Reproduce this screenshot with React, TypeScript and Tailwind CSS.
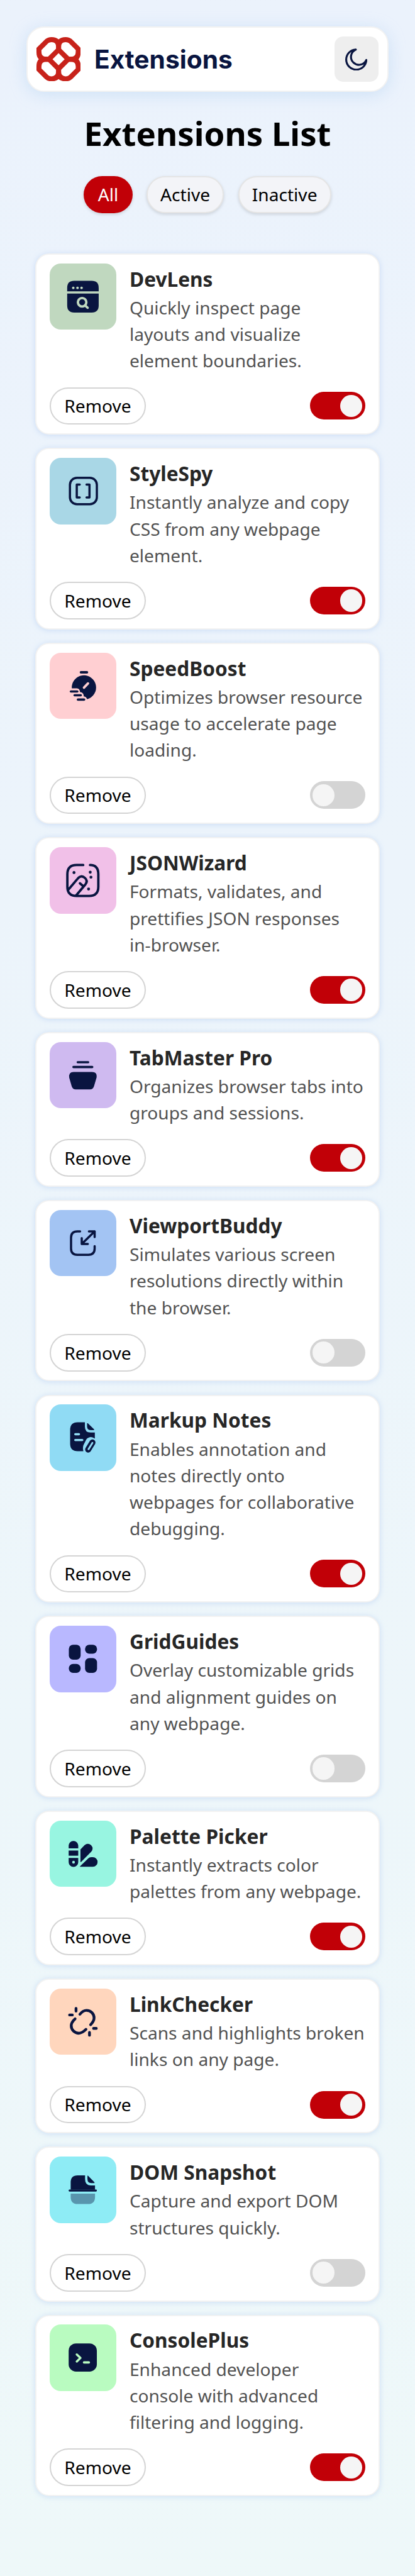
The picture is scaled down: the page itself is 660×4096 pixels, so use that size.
import { useState, type ReactNode } from "react";

type Extension = {
  name: string;
  description: string;
  tile: string;
  viewBox: string;
  icon: ReactNode;
  active: boolean;
};

const NAVY = "#091540";

const extensions: Extension[] = [
  {
    name: "DevLens",
    description: "Quickly inspect page layouts and visualize element boundaries.",
    tile: "#c0d8bf",
    viewBox: "0 0 360 360",
    active: true,
    icon: (
      <>
        <path d="M95 151V132Q95 94 133 94H228Q266 94 266 132V151Z" fill={NAVY} />
        <path d="M95 163H266V228Q266 266 228 266H133Q95 266 95 228Z" fill={NAVY} />
        <g fill="#c0d8bf">
          <circle cx="128" cy="132" r="7" />
          <circle cx="151" cy="132" r="7" />
          <circle cx="173" cy="132" r="7" />
        </g>
        <g stroke="#c0d8bf" strokeWidth="13" strokeLinecap="round">
          <circle cx="176" cy="210" r="23" />
          <path d="M194 229L206 240" />
        </g>
      </>
    ),
  },
  {
    name: "StyleSpy",
    description: "Instantly analyze and copy CSS from any webpage element.",
    tile: "#a9d7e6",
    viewBox: "0 0 360 360",
    active: true,
    icon: (
      <g stroke={NAVY} strokeWidth="12" strokeLinecap="round" strokeLinejoin="round">
        <rect x="110" y="108" width="146" height="144" rx="38" />
        <path d="M163 145H147V215H163" />
        <path d="M200 145H216V215H200" />
      </g>
    ),
  },
  {
    name: "SpeedBoost",
    description: "Optimizes browser resource usage to accelerate page loading.",
    tile: "#ffcfd2",
    viewBox: "30 30 360 360",
    active: false,
    icon: (
      <>
        <g fill={NAVY}>
          <rect x="193" y="129" width="46" height="14" rx="7" />
          <rect x="139" y="234" width="47" height="12" rx="6" />
          <rect x="159" y="254" width="46" height="12" rx="6" />
          <rect x="177" y="277" width="46" height="13" rx="6" />
          <path d="M150 223A66 66 0 1 1 233 282C230 272 224 267 215 266C215 252 208 244 195 243C193 230 188 223 178 223Z" />
        </g>
        <path d="M216 219L238 196" stroke="#ffcfd2" strokeWidth="13" strokeLinecap="round" />
      </>
    ),
  },
  {
    name: "JSONWizard",
    description: "Formats, validates, and prettifies JSON responses in-browser.",
    tile: "#f1c0e8",
    viewBox: "30 -25 360 360",
    active: true,
    icon: (
      <>
        <g stroke={NAVY} strokeWidth="13" strokeLinecap="round" strokeLinejoin="round">
          <path d="M212 72H176Q126 72 126 122V190Q126 240 176 240H244Q294 240 294 190V122Q294 72 249 72" />
          <path d="M131 206L182 146C194 131 208 130 220 141C233 152 234 164 224 177L173 238" />
          <path d="M194 171L210 185" />
        </g>
        <g fill={NAVY}>
          <circle cx="162" cy="113" r="8" />
          <circle cx="250" cy="111" r="8" />
          <circle cx="254" cy="138" r="8" />
          <circle cx="241" cy="202" r="8" />
        </g>
      </>
    ),
  },
  {
    name: "TabMaster Pro",
    description: "Organizes browser tabs into groups and sessions.",
    tile: "#cfbaf0",
    viewBox: "30 42 360 360",
    active: true,
    icon: (
      <g fill={NAVY}>
        <rect x="176" y="145" width="69" height="12" rx="6" />
        <rect x="153" y="171" width="114" height="13" rx="6" />
        <path d="M160 204H260Q288 204 285 232L271 280Q266 299 248 299H172Q154 299 149 280L136 235Q132 204 160 204Z" />
      </g>
    ),
  },
  {
    name: "ViewportBuddy",
    description: "Simulates various screen resolutions directly within the browser.",
    tile: "#a3c4f3",
    viewBox: "30 954 360 360",
    active: false,
    icon: (
      <g stroke={NAVY} strokeWidth="12" strokeLinecap="round" strokeLinejoin="round">
        <path d="M195 1070H180Q146 1070 146 1104V1163Q146 1197 180 1197H240Q274 1197 274 1163V1150" />
        <path d="M204 1138L274 1070M243 1070H274V1101M204 1107V1138H237" />
      </g>
    ),
  },
  {
    name: "Markup Notes",
    description: "Enables annotation and notes directly onto webpages for collaborative debugging.",
    tile: "#90dbf4",
    viewBox: "30 30 360 360",
    active: true,
    icon: (
      <>
        <g fill={NAVY}>
          <path d="M182 127H221V150Q221 183 252 183H275V216Q262 205 248 208Q235 210 228 222L213 252Q208 268 213 284H182Q141 284 141 243V168Q141 127 182 127Z" />
          <path d="M233 132H237L271 166V170H255Q233 170 233 150Z" />
        </g>
        <g strokeLinecap="round">
          <path d="M169 192H189M169 224H207" stroke="#90dbf4" strokeWidth="12" />
          <path d="M262 237L239 275" stroke={NAVY} strokeWidth="33" />
          <path d="M262 239L241 273" stroke="#90dbf4" strokeWidth="10" />
        </g>
      </>
    ),
  },
  {
    name: "GridGuides",
    description: "Overlay customizable grids and alignment guides on any webpage.",
    tile: "#b9b8ff",
    viewBox: "30 30 360 360",
    active: false,
    icon: (
      <g fill={NAVY}>
        <rect x="134" y="133" width="64" height="81" rx="23" />
        <rect x="222" y="133" width="65" height="49" rx="23" />
        <rect x="134" y="237" width="64" height="49" rx="23" />
        <rect x="222" y="206" width="65" height="80" rx="23" />
      </g>
    ),
  },
  {
    name: "Palette Picker",
    description: "Instantly extracts color palettes from any webpage.",
    tile: "#98f5e1",
    viewBox: "30 36 360 360",
    active: true,
    icon: (
      <g fill={NAVY}>
        <path d="M133 186V172A26 26 0 0 1 185 172V186Z" />
        <rect x="133" y="198" width="52" height="28" />
        <path
          fillRule="evenodd"
          d="M133 238H185V261A26 26 0 0 1 133 261ZM152 261A7.500 7.500 0 1 0 167 261A7.500 7.500 0 1 0 152 261Z"
        />
        <path d="M197 192L219 169Q237 153 255 169Q271 187 255 205L200 260H197Z" />
        <path d="M194 286V284L240 240Q246 234 255 234H264A26 26 0 0 1 264 286Z" />
      </g>
    ),
  },
  {
    name: "LinkChecker",
    description: "Scans and highlights broken links on any page.",
    tile: "#ffd6bd",
    viewBox: "30 948 360 360",
    active: true,
    icon: (
      <g stroke={NAVY} strokeWidth="15" strokeLinecap="round">
        <path d="M194 1087C205 1073 216 1066 230 1066A41 41 0 0 1 271 1107C271 1121 264 1132 252 1144" />
        <path d="M168 1112C156 1123 147 1134 147 1149A41 41 0 0 0 188 1190C204 1190 215 1181 227 1169" />
        <path d="M173 1055V1070M138 1091H153M246 1186V1201M268 1164H283" />
      </g>
    ),
  },
  {
    name: "DOM Snapshot",
    description: "Capture and export DOM structures quickly.",
    tile: "#8eecf5",
    viewBox: "30 30 360 360",
    active: false,
    icon: (
      <g fill={NAVY}>
        <path d="M144 210V170Q144 132 182 132H222V152Q222 187 252 187H276V210Z" />
        <path d="M235 134H238L273 170V174H256Q235 174 235 152Z" />
        <rect x="133" y="209" width="153" height="11" rx="5" />
        <path d="M144 231H276V250Q276 288 238 288H182Q144 288 144 250Z" fillOpacity="0.4" />
      </g>
    ),
  },
  {
    name: "ConsolePlus",
    description: "Enhanced developer console with advanced filtering and logging.",
    tile: "#b9fbc0",
    viewBox: "30 942 360 360",
    active: true,
    icon: (
      <>
        <rect x="133" y="1045" width="153" height="153" rx="40" fill={NAVY} />
        <path
          d="M177 1105L197 1124L177 1143M216 1148H243"
          stroke="#b9fbc0"
          strokeWidth="12"
          strokeLinecap="round"
          strokeLinejoin="round"
        />
      </>
    ),
  },
];

const LOGO_LOOP =
  "M61.500 115.500L103 74Q113 64.500 130 64.500Q168 64.500 168 103V119L116 171H100Q61.500 171 61.500 133Z";

function Logo() {
  return (
    <div className="flex items-center">
      <svg viewBox="48 51 240 240" className="size-10" fill="none" stroke="#c7221a" strokeWidth="27">
        <path d={LOGO_LOOP} />
        <path d={LOGO_LOOP} transform="translate(336 0) scale(-1 1)" />
        <path d={LOGO_LOOP} transform="translate(0 342) scale(1 -1)" />
        <path d={LOGO_LOOP} transform="translate(336 342) scale(-1 -1)" />
      </svg>
      <svg viewBox="0 0 276 80" className="h-10 w-[242.7px]">
        <text
          x="25"
          y="57.300"
          fontFamily="Inter, sans-serif"
          fontWeight="700"
          fontSize="46"
          textLength="250"
          lengthAdjust="spacingAndGlyphs"
          fill={NAVY}
        >
          Extensions
        </text>
      </svg>
    </div>
  );
}

function Header() {
  return (
    <header className="flex h-[103.8px] items-center justify-between rounded-[28px] border-2 border-[#f2f2f2] bg-white px-[13.8px] shadow-[0_4px_26px_rgba(160,200,240,0.4)]">
      <Logo />
      <button className="flex h-[72.1px] w-10 items-center justify-center rounded-[14px] bg-[#eeeeee]">
        <svg viewBox="0 0 20 20" className="size-5" fill="none" stroke={NAVY} strokeWidth="1.800" strokeLinejoin="round">
          <path d="M9.600 1A9.100 9.100 0 1 0 19.100 10.400A7.200 7.200 0 1 1 9.600 1Z" />
        </svg>
      </button>
    </header>
  );
}

const filters = [
  { label: "All", width: "w-[77.4px]" },
  { label: "Active", width: "w-[123.1px]" },
  { label: "Inactive", width: "w-[148.1px]" },
];

function Filters({ value, onChange }: { value: string; onChange: (v: string) => void }) {
  return (
    <div className="flex justify-center gap-[22.4px]">
      {filters.map(({ label, width }) => (
        <button
          key={label}
          onClick={() => onChange(label)}
          className={`flex h-[59.8px] items-center justify-center rounded-full border-2 text-[28.14px] font-normal shadow-[0_2px_5px_rgba(0,0,0,0.14)] ${width} ${
            value === label ? "border-[#c10007] bg-[#c10007] text-white" : "border-[#e5e5e5] bg-[#f3f4f8] text-black"
          }`}
        >
          {label}
        </button>
      ))}
    </div>
  );
}

function Card({ item, onToggle, onRemove }: { item: Extension; onToggle: () => void; onRemove: () => void }) {
  return (
    <article className="flex flex-col gap-3 rounded-[22px] border-2 border-[#f2f2f2] bg-white px-[21.1px] py-[13.83px] shadow-[0_1px_9px_rgba(150,185,240,0.4)]">
      <div className="flex items-start gap-3">
        <div className="size-15 shrink-0 overflow-hidden rounded-[18px]" style={{ backgroundColor: item.tile }}>
          <svg viewBox={item.viewBox} className="size-full" fill="none">
            {item.icon}
          </svg>
        </div>
        <div className="min-w-0 flex-1">
          <h2 className="text-[31.65px] leading-7 font-bold text-[#262626]">{item.name}</h2>
          <p className="text-[28.14px] leading-6 text-[#525252]">{item.description}</p>
        </div>
      </div>
      <div className="flex items-center justify-between">
        <button
          onClick={onRemove}
          className="flex h-[59.8px] w-[152.2px] items-center justify-center rounded-full border-2 border-[#d4d4d4] bg-white text-[28.14px] font-normal text-black"
        >
          Remove
        </button>
        <button
          role="switch"
          aria-checked={item.active}
          onClick={onToggle}
          className={`flex h-[44px] w-[87.9px] items-center rounded-full px-[4.4px] ${
            item.active ? "justify-end bg-[#c10007]" : "justify-start bg-[#d4d4d4]"
          }`}
        >
          <span className="size-5 rounded-full bg-[#f5f5f5]" />
        </button>
      </div>
    </article>
  );
}

export default function App() {
  const [items, setItems] = useState(extensions);
  const [filter, setFilter] = useState("All");
  const shown = items.filter((i) => filter === "All" || i.active === (filter === "Active"));

  return (
    <main className="min-h-[4096px] w-[660px] bg-linear-to-b from-[#ebf2fc] to-[#eef8f9] px-6 pt-6 font-['Noto_Sans',sans-serif] [--spacing:7.035px]">
      <Header />
      <h1 className="mt-[31px] text-center text-[52.76px] leading-10 font-bold text-black">Extensions List</h1>
      <div className="mt-[32.3px]">
        <Filters value={filter} onChange={setFilter} />
      </div>
      <section className="mx-2 mt-9 flex flex-col gap-3">
        {shown.map((item) => (
          <Card
            key={item.name}
            item={item}
            onToggle={() => setItems(items.map((i) => (i === item ? { ...i, active: !i.active } : i)))}
            onRemove={() => setItems(items.filter((i) => i !== item))}
          />
        ))}
      </section>
    </main>
  );
}
